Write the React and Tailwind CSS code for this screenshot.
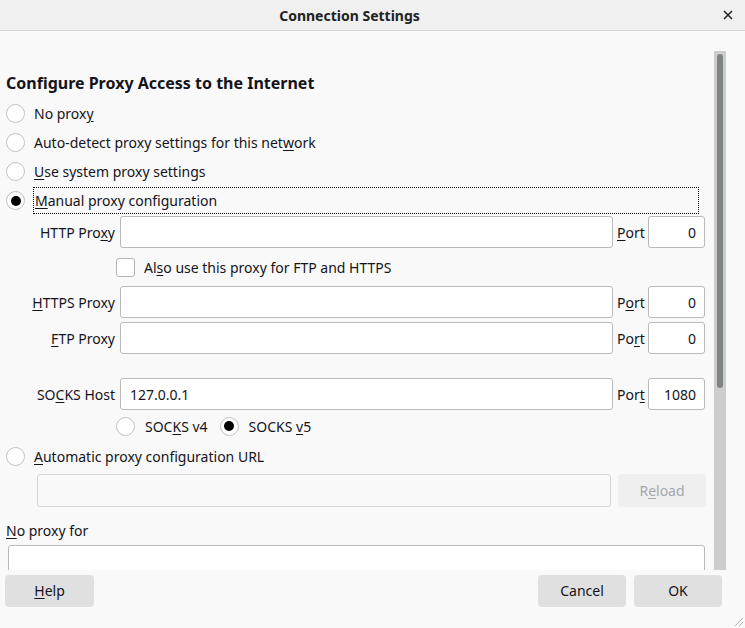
import React from 'react'

function Radio({ checked }) {
  return (
    <span className="flex h-[19px] w-[19px] shrink-0 items-center justify-center rounded-full border border-[#c2c2c2] bg-white">
      {checked && <span className="h-[10px] w-[10px] rounded-full bg-black" />}
    </span>
  )
}

function Field({ value = '', right = false, className = '' }) {
  return (
    <div
      className={`flex h-[32px] items-center rounded-[3px] border border-[#b9b9b9] bg-white px-[8px] text-[14px] text-[#15141a] ${right ? 'justify-end' : ''} ${className}`}
    >
      {value}
    </div>
  )
}

function ProxyRow({ label, portKey, port = '0', value = '', className = '' }) {
  return (
    <div className={`flex items-center ${className}`}>
      <div className="w-[110px] shrink-0 pr-[1px] text-right">{label}</div>
      <Field value={value} className="ml-[4px] w-[493px] pl-[9px]" />
      <div className="ml-[4px] w-[28px]">{portKey}</div>
      <Field value={port} right className="ml-[3px] w-[57px]" />
    </div>
  )
}

export default function App() {
  return (
    <div className="relative flex h-[628px] w-[745px] flex-col overflow-hidden bg-[#f9f9f9] font-['Noto_Sans','DejaVu_Sans',sans-serif] text-[14px] text-[#15141a]">
      {/* title bar */}
      <div className="flex h-[31px] shrink-0 items-center border-b border-[#d4d4d4] bg-[#f0f0f0]">
        <div className="w-[699px] text-center text-[14px] font-bold text-[#222]">Connection Settings</div>
        <div className="flex flex-1 justify-end pr-[12px]">
          <svg width="10" height="10" viewBox="0 0 10 10">
            <path d="M1 1 L9 9 M9 1 L1 9" stroke="#222" strokeWidth="1.5" />
          </svg>
        </div>
      </div>

      {/* scrolling content */}
      <div className="flex h-[539px] shrink-0 overflow-hidden">
        <div className="w-[714px] shrink-0 pl-[6px]">
          <div className="mt-[40px] h-[24px] text-[16px] font-bold leading-[24px]">
            Configure Proxy Access to the Internet
          </div>
          <div className="mt-[4px] flex h-[29px] items-center gap-[9px]">
            <Radio />
            <span>
              No prox<u className="underline-offset-2">y</u>
            </span>
          </div>
          <div className="flex h-[29px] items-center gap-[9px]">
            <Radio />
            <span>
              Auto-detect proxy settings for this net<u className="underline-offset-2">w</u>ork
            </span>
          </div>
          <div className="flex h-[29px] items-center gap-[9px]">
            <Radio />
            <span>
              <u className="underline-offset-2">U</u>se system proxy settings
            </span>
          </div>
          <div className="flex h-[29px] items-center gap-[8px]">
            <Radio checked />
            <span className="flex h-[27px] w-[666px] items-center border border-dotted border-black pl-[1px]">
              <span>
                <u className="underline-offset-2">M</u>anual proxy configuration
              </span>
            </span>
          </div>

          <ProxyRow
            className="mt-[1px]"
            label={
              <>
                HTTP Pro<u className="underline-offset-2">x</u>y
              </>
            }
            portKey={
              <>
                <u className="underline-offset-2">P</u>ort
              </>
            }
          />
          <div className="mt-[9px] flex h-[20px] items-center pl-[110px]">
            <span className="h-[19px] w-[19px] rounded-[3px] border border-[#b3b3b3] bg-white" />
            <span className="ml-[9px]">
              Al<u className="underline-offset-2">s</u>o use this proxy for FTP and HTTPS
            </span>
          </div>
          <ProxyRow
            className="mt-[9px]"
            label={
              <>
                <u className="underline-offset-2">H</u>TTPS Proxy
              </>
            }
            portKey={
              <>
                P<u className="underline-offset-2">o</u>rt
              </>
            }
          />
          <ProxyRow
            className="mt-[4px]"
            label={
              <>
                <u className="underline-offset-2">F</u>TP Proxy
              </>
            }
            portKey={
              <>
                Po<u className="underline-offset-2">r</u>t
              </>
            }
          />
          <ProxyRow
            className="mt-[24px]"
            value="127.0.0.1"
            port="1080"
            label={
              <>
                SO<u className="underline-offset-2">C</u>KS Host
              </>
            }
            portKey={
              <>
                Por<u className="underline-offset-2">t</u>
              </>
            }
          />
          <div className="mt-[5px] flex h-[22px] items-center pl-[110px]">
            <Radio />
            <span className="ml-[10px]">
              SOC<u className="underline-offset-2">K</u>S v4
            </span>
            <span className="ml-[12px]">
              <Radio checked />
            </span>
            <span className="ml-[10px]">
              SOCKS <u className="underline-offset-2">v</u>5
            </span>
          </div>
          <div className="mt-[6px] flex h-[26px] items-center gap-[9px]">
            <Radio />
            <span>
              <u className="underline-offset-2">A</u>utomatic proxy configuration URL
            </span>
          </div>
          <div className="mt-[5px] flex items-center pl-[31px]">
            <div className="h-[33px] w-[574px] rounded-[3px] border border-[#d6d6d6] bg-[#f9f9f9]" />
            <div className="ml-[7px] flex h-[33px] w-[88px] items-center justify-center rounded-[4px] bg-[#efefef] text-[#a6a6ad]">
              <span>
                R<u className="underline-offset-2">e</u>load
              </span>
            </div>
          </div>
          <div className="mt-[12px] flex h-[22px] items-center">
            <span>
              <u className="underline-offset-2">N</u>o proxy for
            </span>
          </div>
          <div className="ml-[2px] mt-[4px] h-[60px] w-[697px] rounded-[3px] border border-[#b9b9b9] bg-white" />
        </div>

        {/* scrollbar */}
        <div className="mt-[20px] flex w-[12px] shrink-0 justify-center bg-[#cdcdcd] pt-[3px]">
          <div className="h-[334px] w-[6px] rounded-full bg-[#7f8585]" />
        </div>
      </div>

      {/* footer */}
      <div className="flex h-[58px] items-start px-[5px] pt-[5px]">
        <div className="flex h-[32px] w-[89px] items-center justify-center rounded-[4px] bg-[#e0e0e0] pb-[2px]">
          <span>
            <u className="underline-offset-2">H</u>elp
          </span>
        </div>
        <div className="ml-auto flex h-[32px] w-[88px] items-center justify-center rounded-[4px] bg-[#e0e0e0] pb-[2px]">
          Cancel
        </div>
        <div className="ml-[8px] mr-[18px] flex h-[32px] w-[88px] items-center justify-center rounded-[4px] bg-[#e0e0e0] pb-[2px]">
          OK
        </div>
      </div>

      <svg className="absolute bottom-[2px] right-[2px]" width="10" height="10" viewBox="0 0 10 10">
        <path d="M2 10 L10 2 M6 10 L10 6" stroke="#b0b0b0" strokeWidth="1" />
      </svg>
    </div>
  )
}
